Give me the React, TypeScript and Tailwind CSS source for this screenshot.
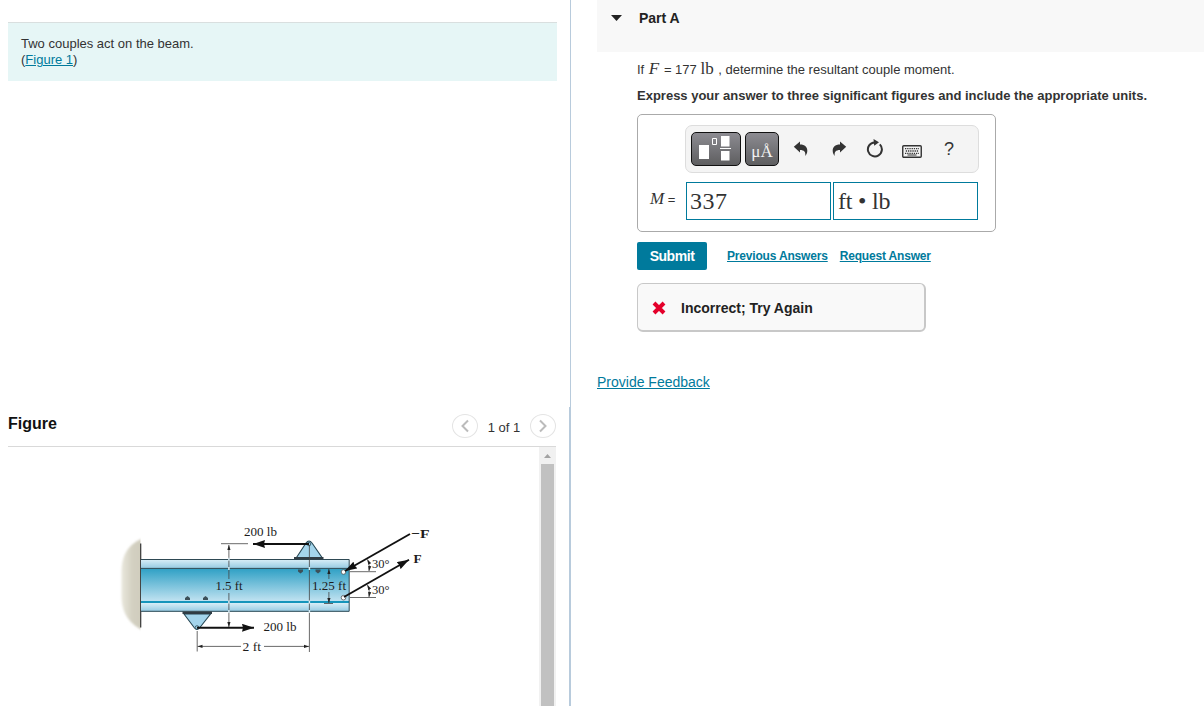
import type { ReactNode } from "react";

import clsx from "clsx";

interface ToolButtonProps {
  label: string;
  className?: string;
  children: ReactNode;
}

const ToolButton = ({ label, className, children }: ToolButtonProps) => (
  <button
    aria-label={label}
    className={clsx("flex items-center justify-center text-[#333]", className)}
  >
    {children}
  </button>
);

const darkButton =
  "h-[34px] rounded-[5px] border border-[#111] bg-linear-to-b from-[#8d8c92] to-[#5e5e60]";

const UndoIcon = () => (
  <svg width="16" height="16" viewBox="0 0 16 16" fill="currentColor">
    <path d="M.800 5.800 7 .500v3.100c5 0 7.300 2.600 7.300 6.200 0 2-.7 3.800-2 5.200.5-4-1-6-5.300-6v2.500z" />
  </svg>
);

const ResetIcon = () => (
  <svg width="20" height="20" viewBox="0 0 20 20">
    <path
      d="M14.800 6.400A7 7 0 1 1 9.500 4.400"
      fill="none"
      stroke="currentColor"
      strokeWidth="2"
    />
    <path d="M8.500 1 14 4.300 9.200 7.800z" fill="currentColor" />
  </svg>
);

const KeyboardIcon = () => (
  <svg width="20" height="13" viewBox="0 0 20 13">
    <rect
      x=".75"
      y=".75"
      width="18.500"
      height="11.500"
      rx="1"
      fill="none"
      stroke="currentColor"
      strokeWidth="1.400"
    />
    <path
      d="M3 3.700h14M3.800 6h13M3 8.300h14"
      stroke="currentColor"
      strokeWidth="1.300"
      strokeDasharray="1.300 .9"
    />
    <path d="M5.500 10h9" stroke="currentColor" strokeWidth="1" />
  </svg>
);

const AnswerToolbar = () => (
  <div className="flex h-12 w-[294px] items-center rounded-[7px] border border-[#ddd] bg-[#f4f4f4] pl-[5px]">
    <ToolButton label="Templates" className={clsx(darkButton, "w-[50px]")}>
      <svg width="34" height="26" viewBox="0 0 34 26">
        <path d="M0 9h10v14H0zM22 0h8.500v10.500H22zM22 15h8.500v9.500H22z" fill="#fff" />
        <path d="M21 12.500h11" stroke="#fff" />
        <path d="M13.500 2.500h4v6h-4z" fill="none" stroke="#fff" />
      </svg>
    </ToolButton>
    <ToolButton
      label="Symbols"
      className={clsx(
        darkButton,
        "ml-1 w-[34px] pt-[5px] font-['Liberation_Serif',serif] text-[17px] text-[#f2f2f2]",
      )}
    >
      μÅ
    </ToolButton>
    <ToolButton label="Undo" className="ml-[14px]">
      <UndoIcon />
    </ToolButton>
    <ToolButton label="Redo" className="ml-[22px] -scale-x-100">
      <UndoIcon />
    </ToolButton>
    <ToolButton label="Reset" className="ml-[18px] pb-0.5">
      <ResetIcon />
    </ToolButton>
    <ToolButton label="Keyboard" className="mt-1 ml-[17px]">
      <KeyboardIcon />
    </ToolButton>
    <ToolButton label="Help" className="ml-[22px] text-[18px]">
      ?
    </ToolButton>
  </div>
);

const BeamFigure = () => (
  <svg
    width="330"
    height="145"
    viewBox="110 515 330 145"
    className="mt-[68px] ml-[102px]"
    fontFamily="'Liberation Serif', serif"
    fontSize="13.300"
    fill="#1c1c1c"
  >
    <defs>
      <linearGradient id="web" x1="0" y1="0" x2="0" y2="1">
        <stop offset="0" stopColor="#2fa0c5" />
        <stop offset="1" stopColor="#c4e4f2" />
      </linearGradient>
      <linearGradient id="flange" x1="0" y1="0" x2="0" y2="1">
        <stop offset="0" stopColor="#d9eef7" />
        <stop offset="1" stopColor="#94cae2" />
      </linearGradient>
      <linearGradient id="wall" x1="0" y1="0" x2="1" y2="0">
        <stop offset="0" stopColor="#e9e7dc" />
        <stop offset=".5" stopColor="#d3d0c1" />
        <stop offset="1" stopColor="#cfccbd" />
      </linearGradient>
      <filter id="soft">
        <feGaussianBlur stdDeviation="1" />
      </filter>
      <clipPath id="wall-side">
        <path d="M110 530h30.500v110H110z" />
      </clipPath>
      <marker
        id="arrow"
        viewBox="0 0 12 8"
        refX="12"
        refY="4"
        markerWidth="12"
        markerHeight="8"
        markerUnits="userSpaceOnUse"
        orient="auto"
      >
        <path d="M0 0 12 4 0 8 1 4z" fill="#111" />
      </marker>
      <marker
        id="tip"
        viewBox="0 0 5 4"
        refX="5"
        refY="2"
        markerWidth="5"
        markerHeight="4"
        markerUnits="userSpaceOnUse"
        orient="auto-start-reverse"
      >
        <path d="M0 .400 5 2 0 3.600z" fill="#222" />
      </marker>
    </defs>

    {/* wall */}
    <g clipPath="url(#wall-side)">
      <path
        d="M144 538C130 543 121.500 553 121.500 572v24c0 18 9 29 22.500 35z"
        fill="url(#wall)"
        filter="url(#soft)"
      />
    </g>
    <path d="M140.700 543.500V627.500" stroke="#333" strokeWidth="1.200" />

    {/* beam */}
    <path d="M141 559.500h208v9H141z" fill="url(#flange)" />
    <path d="M141 568.500h208V602H141z" fill="url(#web)" />
    <path d="M141 603h208v8.500H141z" fill="url(#flange)" />
    <path d="M141 602h208" stroke="#1695bb" strokeWidth="2" />
    <path
      d="M141 559.500h208.200v51.800H141M141 568.400h208"
      fill="none"
      stroke="#2e4954"
    />

    {/* brackets */}
    <g fill="#a4d5ec" stroke="#264653" strokeWidth="1.100">
      <path d="m184 614 10.500 14q2.500 3 5 0L210.500 614z" />
      <path d="M296.500 557.500 306 543q3-4 6 0l10 14.500z" />
    </g>
    <path
      d="M182.500 612.800h29.500M294 558.300h29.500"
      stroke="#303c44"
      strokeWidth="2.400"
    />
    <g fill="#3d5059">
      <path d="M185 600v-2l2.500-2 2.500 2v2zM203 600v-2l2.500-2 2.500 2v2z" />
      <path d="M298 569.500v2l2.500 2 2.500-2v-2zM315.500 569.500v2l2.500 2 2.500-2v-2z" />
    </g>
    <g fill="#9fd3e9" stroke="#264653" strokeWidth=".8">
      <circle cx="309" cy="544" r="1.800" />
      <circle cx="197" cy="627.500" r="1.800" />
    </g>

    {/* dimensions */}
    <g stroke="#444" strokeWidth=".8" fill="none">
      <path d="M221 543.700h27M197.200 631v20.500M309.400 545v107" />
      <path d="M228.900 579V545" markerEnd="url(#tip)" />
      <path d="M228.900 593v34" markerEnd="url(#tip)" />
      <path d="M241 646.400h-43.500" markerEnd="url(#tip)" />
      <path d="M264 646.400h45" markerEnd="url(#tip)" />
      <path d="M328.900 579v-10" markerEnd="url(#tip)" />
      <path d="M328.900 592v11" markerEnd="url(#tip)" />
      <path d="M324 603.500h9M350 571.700h26M350 597.500h26" />
      <path
        d="M367.500 559.500q2.500 5 1.500 11.500"
        markerStart="url(#tip)"
        markerEnd="url(#tip)"
      />
      <path
        d="M367.500 585q2.500 5 1.500 12"
        markerStart="url(#tip)"
        markerEnd="url(#tip)"
      />
    </g>
    <path
      d="M228.900 557.800v3M228.900 567v3M228.900 600.500v3M228.900 610v3M309.400 567v3M309.400 600.500v3M309.400 610v3"
      stroke="#d7edf6"
      strokeWidth="1.500"
    />

    {/* forces */}
    <g fill="#fff" stroke="#555" strokeWidth=".8">
      <circle cx="343.500" cy="572" r="2.300" />
      <circle cx="343.500" cy="597.700" r="2.300" />
    </g>
    <g stroke="#111" strokeWidth="1.900">
      <path d="M309 544H253" markerEnd="url(#arrow)" />
      <path d="M197 627.800h57" markerEnd="url(#arrow)" />
      <path d="M410 534 345 571" markerEnd="url(#arrow)" />
      <path d="m344 597 65-37.300" markerEnd="url(#arrow)" />
    </g>

    <g lengthAdjust="spacingAndGlyphs">
      <text x="244" y="536" textLength="33" lengthAdjust="spacingAndGlyphs">
        200 lb
      </text>
      <text x="263.500" y="631" textLength="33" lengthAdjust="spacingAndGlyphs">
        200 lb
      </text>
      <text x="215.500" y="590" textLength="27" lengthAdjust="spacingAndGlyphs">
        1.5 ft
      </text>
      <text x="312" y="590" textLength="34" lengthAdjust="spacingAndGlyphs">
        1.25 ft
      </text>
      <text x="242.500" y="651" textLength="18.500" lengthAdjust="spacingAndGlyphs">
        2 ft
      </text>
      <text x="372" y="567.500" textLength="17.500" lengthAdjust="spacingAndGlyphs">
        30°
      </text>
      <text x="372" y="593.500" textLength="17.500" lengthAdjust="spacingAndGlyphs">
        30°
      </text>
    </g>
    <g fontWeight="700">
      <text x="411" y="537.500" textLength="18.500" lengthAdjust="spacingAndGlyphs">
        −F
      </text>
      <text x="413.500" y="563">
        F
      </text>
    </g>
  </svg>
);

const PagerButton = ({ next }: { next?: boolean }) => (
  <button
    aria-label={next ? "Next figure" : "Previous figure"}
    className="flex h-6 w-[26px] items-center justify-center rounded-[50%] border border-[#e4e4e4]"
  >
    <svg
      width="10"
      height="14"
      viewBox="0 0 10 14"
      fill="none"
      stroke="#bbb"
      strokeWidth="2"
    >
      <path d={next ? "m2 1.500 5.500 5.500L2 12.500" : "M8 1.500 2.500 7 8 12.500"} />
    </svg>
  </button>
);

const ProblemPane = () => (
  <section className="flex h-full w-[569px] flex-col pl-2">
    <div className="mt-[22px] h-[59px] w-[549px] border-t border-[#d9dfdf] bg-[#e6f6f6] pt-[13px] pl-[13px] text-[13px] leading-4">
      <p>Two couples act on the beam.</p>
      <p>
        (
        <a href="#figure" className="text-[#007a9c] underline">
          Figure 1
        </a>
        )
      </p>
    </div>
    <div
      id="figure"
      className="mt-[326px] flex h-10 w-[548px] justify-between border-b border-[#d9d9d9]"
    >
      <h2 className="pt-[5px] text-base font-bold text-[#111]">Figure</h2>
      <div className="flex h-6 items-center pt-[14px]">
        <PagerButton />
        <span className="w-[52px] pt-[3px] text-center text-[13px]">
          1 of 1
        </span>
        <PagerButton next />
      </div>
    </div>
    <div className="flex w-[548px] flex-1 justify-between">
      <BeamFigure />
      <div className="flex w-[17px] flex-col items-center bg-[#f1f1f1]">
        <svg width="17" height="17" viewBox="0 0 17 17" className="shrink-0">
          <path d="M5 11h7L8.500 7z" fill="#a3a3a3" />
        </svg>
        <div className="w-[13px] flex-1 bg-[#c1c1c1]" />
      </div>
    </div>
  </section>
);

const AnswerBox = () => (
  <div className="mt-2 h-[118px] w-[359px] rounded-[5px] border border-[#aaa] pt-[10px] pl-3">
    <div className="pl-[35px]">
      <AnswerToolbar />
    </div>
    <div className="mt-[9px] flex items-center">
      <span className="w-9 pb-1 whitespace-nowrap">
        <i className="font-['Liberation_Serif',serif] text-[17px]">M</i>
        <span className="text-[13px]"> =</span>
      </span>
      <div className="flex gap-0.5 font-['Liberation_Serif',serif] text-[24px] leading-[36px]">
        <div className="h-[38px] w-[145px] border border-[#007a9c] pl-[3px] tracking-[0.500px]">
          337
        </div>
        <div className="h-[38px] w-[145px] border border-[#007a9c] pl-1 tracking-[-0.200px]">
          ft • lb
        </div>
      </div>
    </div>
  </div>
);

const PartPane = () => (
  <section className="flex-1 pl-[26px]">
    <div className="flex h-[52px] bg-[#f8f8f8] pt-[9px]">
      <svg width="11" height="6" viewBox="0 0 11 6" className="mt-1.5 ml-3.5">
        <path d="M0 0h11L5.500 6z" fill="#222" />
      </svg>
      <h2 className="ml-[17px] text-[14px] leading-[18px] font-bold text-[#222]">
        Part A
      </h2>
    </div>
    <div className="pl-10">
      <p className="mt-[7px] h-5 text-[13px] leading-5">
        If{" "}
        <i className="mr-px ml-px font-['Liberation_Serif',serif] text-[17px]">
          F
        </i>{" "}
        = 177{" "}
        <span className="mr-px font-['Liberation_Serif',serif] text-[17px]">
          lb
        </span>{" "}
        , determine the resultant couple moment.
      </p>
      <p className="mt-[7px] text-[13px] leading-5 font-bold">
        Express your answer to three significant figures and include the
        appropriate units.
      </p>
      <AnswerBox />
      <div className="mt-[10px] flex h-7 items-center text-xs font-bold tracking-[-0.180px] text-[#007a9c]">
        <button className="h-7 w-[70px] rounded-[2px] bg-[#007a9c] text-[14px] tracking-[-0.450px] text-white">
          Submit
        </button>
        <a href="#previous" className="ml-5 underline">
          Previous Answers
        </a>
        <a href="#request" className="ml-3 underline">
          Request Answer
        </a>
      </div>
      <div className="mt-[13px] flex h-[49px] w-[289px] items-center rounded-[6px] border border-r-2 border-b-2 border-[#c8c8c8] bg-[#f9f9f9] pt-0.5 pl-3.5 text-[14px] font-bold text-[#222]">
        <svg width="14" height="14" viewBox="0 0 14 14">
          <path d="m2 2 10 10M12 2 2 12" stroke="#e4002b" strokeWidth="4" />
        </svg>
        <span className="ml-[15px]">Incorrect; Try Again</span>
      </div>
    </div>
    <a
      href="#feedback"
      className="mt-10 inline-block text-[14px] leading-5 text-[#007a9c] underline"
    >
      Provide Feedback
    </a>
  </section>
);

const App = () => (
  <main className="flex h-screen overflow-hidden bg-white font-['Liberation_Sans',Arial,sans-serif] text-[#333]">
    <ProblemPane />
    <div className="flex w-0.5 flex-col items-end">
      <div className="h-[407px] w-px bg-[#b8cbdc]" />
      <div className="w-0.5 flex-1 bg-[#b8cbdc]" />
    </div>
    <PartPane />
  </main>
);

export default App;
